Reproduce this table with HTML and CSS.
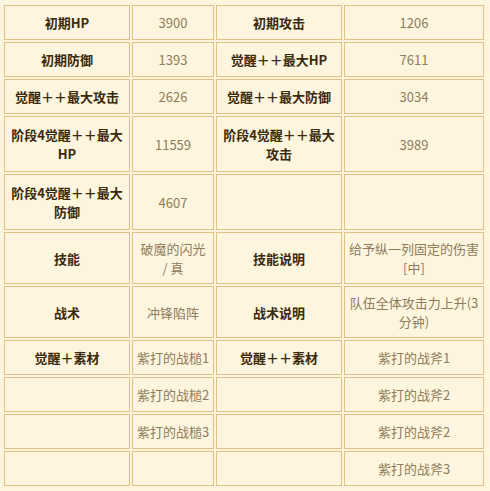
FILE: index.html
```html
<!DOCTYPE html>
<html lang="zh">
<head>
<meta charset="utf-8">
<link rel="stylesheet" href="styles.css">
</head>
<body>
<div class="sheet">
  <div class="c k">初期HP</div><div class="c v">3900</div><div class="c k">初期攻击</div><div class="c v">1206</div>
  <div class="c k">初期防御</div><div class="c v">1393</div><div class="c k">觉醒＋＋最大HP</div><div class="c v">7611</div>
  <div class="c k">觉醒＋＋最大攻击</div><div class="c v">2626</div><div class="c k">觉醒＋＋最大防御</div><div class="c v">3034</div>
  <div class="c k">阶段4觉醒＋＋最大<br>HP</div><div class="c v">11559</div><div class="c k">阶段4觉醒＋＋最大<br>攻击</div><div class="c v">3989</div>
  <div class="c k">阶段4觉醒＋＋最大<br>防御</div><div class="c v">4607</div><div class="c k"></div><div class="c v"></div>
  <div class="c k">技能</div><div class="c v">破魔的闪光<br>/ 真</div><div class="c k">技能说明</div><div class="c v">给予纵一列固定的伤害<br>[中]</div>
  <div class="c k">战术</div><div class="c v">冲锋陷阵</div><div class="c k">战术说明</div><div class="c v">队伍全体攻击力上升(3<br>分钟)</div>
  <div class="c k">觉醒＋素材</div><div class="c v">紫打的战槌1</div><div class="c k">觉醒＋＋素材</div><div class="c v">紫打的战斧1</div>
  <div class="c k"></div><div class="c v">紫打的战槌2</div><div class="c k"></div><div class="c v">紫打的战斧2</div>
  <div class="c k"></div><div class="c v">紫打的战槌3</div><div class="c k"></div><div class="c v">紫打的战斧2</div>
  <div class="c k"></div><div class="c v"></div><div class="c k"></div><div class="c v">紫打的战斧3</div>
</div>
</body>
</html>
```
FILE: styles.css
```css
html, body {
  margin: 0;
  padding: 0;
  background: #fef5de;
}
body {
  padding: 5px 0 0 4px;
  font-family: "Noto Sans CJK SC", "Noto Sans", sans-serif;
  font-size: 13px;
}
.sheet {
  display: grid;
  grid-template-columns: 126px 82px 126px 140px;
  grid-template-rows: 35px 35px 35px 56px 56px 52px 52px 35px 35px 35px 35px;
  gap: 2px;
}
.c {
  box-sizing: border-box;
  border: 1px solid #e1c185;
  background: #fef5de;
  display: flex;
  align-items: center;
  justify-content: center;
  text-align: center;
  padding: 0 3px;
  line-height: 19px;
}
.k {
  font-weight: bold;
  color: #3a2a0c;
}
.v {
  color: #8e7c5c;
}
```
